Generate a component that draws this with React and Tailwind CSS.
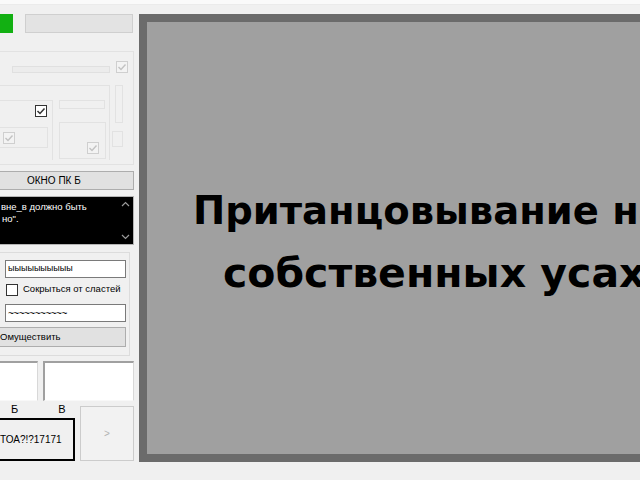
const DisCheck = ({ className = "" }) => (
  <div className={"w-[12px] h-[12px] border border-[#cfcfcf] bg-[#f3f3f3] flex items-center justify-center " + className}>
    <svg width="10" height="10" viewBox="0 0 10 10">
      <path d="M1.5 5 L4 7.5 L8.5 2.5" fill="none" stroke="#c2c2c2" strokeWidth="1.4" />
    </svg>
  </div>
);

export default function App() {
  return (
    <div className="w-[640px] h-[480px] bg-[#f0f0f0] overflow-hidden font-['Liberation_Sans',Arial,sans-serif] text-[10px] text-black">
      <div className="h-[5px] bg-[#fafafa] border-b border-[#ebebeb]" />
      <div className="flex h-[474px]">
        {/* left column */}
        <div className="w-[139px] shrink-0 flex flex-col">
          <div className="mt-[9px] flex h-[19px]">
            <div className="w-[13px] h-[19px] bg-[#12b012]" />
            <div className="ml-[12px] w-[108px] h-[19px] border border-[#cfcfcf] bg-[#e3e3e3]" />
          </div>

          {/* disabled group */}
          <div className="mt-[18px] w-[134px] h-[114px] border border-l-0 border-[#e2e2e2] flex flex-col">
            <div className="mt-[9px] flex h-[13px]">
              <div className="ml-[12px] mt-[5px] w-[98px] h-[7px] border border-[#e0e0e0] bg-[#ececec]" />
              <DisCheck className="ml-[6px]" />
            </div>
            <div className="mt-[11px] flex">
              <div className="w-[110px] h-[75px] border-t border-r border-[#e2e2e2] flex">
                <div className="mt-[14px] w-[53px] h-[60px] border-t border-r border-[#e2e2e2] flex flex-col">
                  <div className="ml-[35px] mt-[4px] w-[12px] h-[12px] border border-[#333] bg-white flex items-center justify-center">
                    <svg width="10" height="10" viewBox="0 0 10 10">
                      <path d="M1.5 5 L4 7.5 L8.5 2.5" fill="none" stroke="#333" strokeWidth="1.5" />
                    </svg>
                  </div>
                  <div className="mt-[10px] w-[48px] h-[21px] border border-l-0 border-[#e2e2e2] flex items-center">
                    <DisCheck className="ml-[3px]" />
                  </div>
                </div>
                <div className="ml-[6px] mt-[14px] flex flex-col">
                  <div className="w-[46px] h-[9px] border border-[#e2e2e2]" />
                  <div className="mt-[13px] w-[47px] h-[37px] border border-[#e2e2e2] flex flex-col">
                    <DisCheck className="ml-[27px] mt-[19px]" />
                  </div>
                </div>
              </div>
              <div className="ml-[5px] flex flex-col">
                <div className="w-[8px] h-[38px] border border-[#e2e2e2]" />
                <div className="mt-[8px] -ml-[3px] w-[11px] h-[16px] border border-[#e2e2e2]" />
              </div>
            </div>
          </div>

          {/* OKNO button */}
          <div className="mt-[6px] w-[134px] h-[19px] border border-l-0 border-[#adadad] bg-[#e1e1e1] flex items-center pl-[27px] text-[10px]">
            ОКНО ПК Б
          </div>

          {/* black textbox */}
          <div className="mt-[6px] w-[134px] h-[49px] border border-l-0 border-[#b4b4b4] bg-black flex">
            <div className="flex-1 text-white text-[9.5px] leading-[12px] pt-[4px] pl-[1px] whitespace-nowrap overflow-hidden">
              <div>вне_в должно быть</div>
              <div className="ml-[1px]">но".</div>
            </div>
            <div className="w-[16px] flex flex-col items-center justify-between pt-[4px] pb-[4px]">
              <svg width="9" height="6" viewBox="0 0 9 6"><path d="M1 5 L4.5 1.5 L8 5" fill="none" stroke="#9a9a9a" strokeWidth="1.2" /></svg>
              <svg width="9" height="6" viewBox="0 0 9 6"><path d="M1 1 L4.5 4.5 L8 1" fill="none" stroke="#9a9a9a" strokeWidth="1.2" /></svg>
            </div>
          </div>

          {/* group box */}
          <div className="mt-[7px] w-[130px] h-[104px] border border-l-0 border-[#dcdcdc] flex flex-col">
            <div className="mt-[7px] ml-[5px] w-[121px] h-[18px] border border-[#7a7a7a] bg-white flex items-center pl-[2px] text-[9px]">
              ыыыыыыыыыы
            </div>
            <div className="mt-[5px] flex items-center h-[13px] whitespace-nowrap">
              <div className="ml-[6px] w-[12px] h-[12px] shrink-0 border border-[#333] bg-white" />
              <span className="ml-[5px] text-[9.5px]">Сокрыться от сластей</span>
            </div>
            <div className="mt-[8px] ml-[5px] w-[121px] h-[18px] border border-[#7a7a7a] bg-white flex items-center pl-[2px] text-[10px] tracking-[-0.5px]">
              ~~~~~~~~~~~
            </div>
            <div className="mt-[5px] w-[126px] h-[20px] border border-l-0 border-[#adadad] bg-[#e1e1e1] flex items-center whitespace-nowrap text-[9.5px]">
              <span>Омуществить</span>
            </div>
          </div>

          {/* white boxes */}
          <div className="mt-[5px] flex">
            <div className="w-[38px] h-[40px] bg-white border-t-2 border-r border-b border-t-[#a0a0a0] border-r-[#d8d8d8] border-b-[#f8f8f8]" />
            <div className="ml-[5px] w-[91px] h-[40px] bg-white border-t-2 border-l-2 border-r border-b border-t-[#a0a0a0] border-l-[#a0a0a0] border-r-[#d8d8d8] border-b-[#f8f8f8]" />
          </div>

          <div className="flex">
            <div className="w-[76px] flex flex-col">
              <div className="h-[17px] flex items-center text-[11px]">
                <span className="ml-[11px]">Б</span>
                <span className="ml-[40px]">В</span>
              </div>
              <div className="w-[75px] h-[43px] border-2 border-l-0 border-black bg-[#f0f0f0] flex items-center whitespace-nowrap text-[10px]">
                <span>ТОА?!?17171</span>
              </div>
            </div>
            <div className="ml-[4px] mt-[5px] w-[54px] h-[55px] border border-[#cccccc] bg-[#f2f2f2] flex items-center justify-center text-[#b3b3b3]">
              &gt;
            </div>
          </div>
        </div>

        {/* main display */}
        <div className="flex-1 pt-[9px]">
          <div className="h-[448px] border-[8px] border-r-0 border-[#6b6b6b] bg-[#a0a0a0] overflow-hidden">
            <div className="pt-[157px] font-bold text-black whitespace-nowrap font-['DejaVu_Sans',sans-serif]">
              <div className="h-[63px] leading-[63px] ml-[46px] text-[38.5px]">Пританцовывание на</div>
              <div className="h-[63px] leading-[63px] ml-[76px] text-[41px]">собственных усах</div>
            </div>
          </div>
        </div>
      </div>
    </div>
  );
}
